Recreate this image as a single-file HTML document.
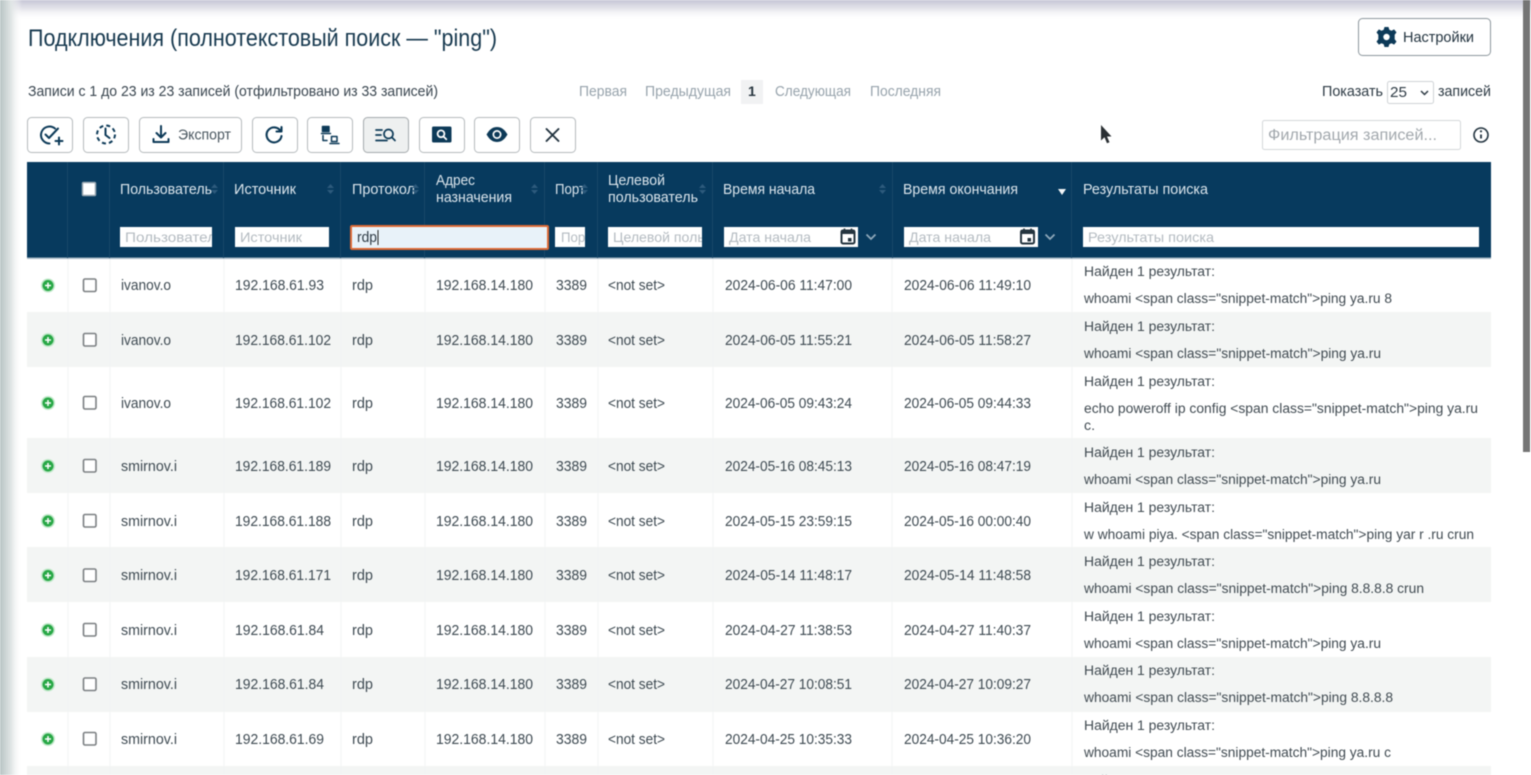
<!DOCTYPE html>
<html lang="ru"><head><meta charset="utf-8"><title>Подключения</title>
<style>
html,body{margin:0;padding:0;width:1531px;height:775px;overflow:hidden;background:#fff}
svg{display:block}
#root{filter:blur(.4px)}
text{font-family:"Liberation Sans","DejaVu Sans",sans-serif;font-size:14.5px;fill:#3e4a52;white-space:pre}
.h{fill:#dbe5ec;font-size:14.5px}
.ph{fill:#b4bbc1;font-size:14px}
.pg{fill:#97a3ac;font-size:14.5px}
.r{fill:#414b52;font-size:14.2px}
.ic{fill:none;stroke:#0d3a58;stroke-width:2;stroke-linecap:round;stroke-linejoin:round}
.ln{stroke:#f2f4f4;stroke-width:1}
.hl{stroke:#194769;stroke-width:1}
.btn{fill:#fff;stroke:#b5babd;stroke-width:1}
.cb{fill:#fff;stroke:#7b7f82;stroke-width:1.6}
.so{fill:#2d5a7c}
</style></head><body>
<svg id="root" width="1531" height="775" viewBox="0 0 1531 775" xmlns="http://www.w3.org/2000/svg">
<defs>
<linearGradient id="t" x1="0" y1="0" x2="0" y2="1"><stop offset="0" stop-color="#c6c6d6"/><stop offset=".45" stop-color="#e6e6ec"/><stop offset="1" stop-color="#fff" stop-opacity="0"/></linearGradient>
<linearGradient id="l" x1="0" y1="0" x2="1" y2="0"><stop offset="0" stop-color="#b8c4c4"/><stop offset=".5" stop-color="#e0e5e5"/><stop offset="1" stop-color="#fff" stop-opacity="0"/></linearGradient>
</defs>
<rect width="1531" height="775" fill="#fff"/>

<!-- striped rows -->
<g fill="#f3f5f4">
<rect x="27" y="312" width="1464" height="55"/>
<rect x="27" y="438" width="1464" height="55"/>
<rect x="27" y="547" width="1464" height="55"/>
<rect x="27" y="657" width="1464" height="55"/>
<rect x="27" y="766" width="1464" height="9"/>
</g>
<g class="ln">
<line x1="68" y1="258" x2="68" y2="775"/><line x1="110" y1="258" x2="110" y2="775"/><line x1="224" y1="258" x2="224" y2="775"/><line x1="341" y1="258" x2="341" y2="775"/><line x1="425" y1="258" x2="425" y2="775"/><line x1="545" y1="258" x2="545" y2="775"/><line x1="598" y1="258" x2="598" y2="775"/><line x1="713" y1="258" x2="713" y2="775"/><line x1="892" y1="258" x2="892" y2="775"/><line x1="1072" y1="258" x2="1072" y2="775"/>
</g>

<!-- edges -->
<rect width="1531" height="20" fill="url(#t)"/>
<rect width="22" height="775" fill="url(#l)"/>
<rect x="1523" y="0" width="7" height="452" fill="#757575"/>

<!-- title -->
<text x="28" y="46" textLength="469" lengthAdjust="spacingAndGlyphs" style="font-size:24px;fill:#17394f">Подключения (полнотекстовый поиск — "ping")</text>
<rect class="btn" x="1358.5" y="18.5" width="132" height="37" rx="4" style="stroke:#8d979d"/>
<!-- gear -->
<g transform="translate(1386.5 37)">
<path fill="#0d3a58" d="M-2-10H2L2.800-7.200 5-6.200 7.600-7.600 10-4.600 8.200-2.200V2.200L10 4.600 7.600 7.600 5 6.200 2.800 7.200 2 10H-2L-2.800 7.200-5 6.200-7.600 7.600-10 4.600-8.200 2.200V-2.200L-10-4.600-7.600-7.600-5-6.200-2.800-7.200Z"/>
<circle r="3.200" fill="#fff"/>
</g>
<text x="1403" y="42" textLength="71" lengthAdjust="spacingAndGlyphs" style="fill:#22333f">Настройки</text>

<!-- info row -->
<text x="28" y="96" textLength="410" lengthAdjust="spacingAndGlyphs" style="fill:#3a4650">Записи с 1 до 23 из 23 записей (отфильтровано из 33 записей)</text>
<text class="pg" x="579" y="96" textLength="48" lengthAdjust="spacingAndGlyphs">Первая</text>
<text class="pg" x="645" y="96" textLength="86" lengthAdjust="spacingAndGlyphs">Предыдущая</text>
<rect x="741" y="80" width="22" height="24" fill="#f1f2f3"/>
<text x="748" y="96" style="fill:#27353f;font-weight:bold;font-size:14px">1</text>
<text class="pg" x="775" y="96" textLength="76" lengthAdjust="spacingAndGlyphs">Следующая</text>
<text class="pg" x="870" y="96" textLength="71" lengthAdjust="spacingAndGlyphs">Последняя</text>
<text x="1322" y="96" textLength="61" lengthAdjust="spacingAndGlyphs" style="fill:#2d3a44">Показать</text>
<rect x="1387.5" y="81.5" width="46" height="22" rx="2" fill="#fff" stroke="#cfd3d6"/>
<text x="1390" y="97" textLength="17" lengthAdjust="spacingAndGlyphs" style="fill:#2d3a44">25</text>
<path d="M1421 91l3.500 3.500 3.500-3.500" fill="none" stroke="#2d3a44" stroke-width="1.500"/>
<text x="1438" y="96" textLength="53" lengthAdjust="spacingAndGlyphs" style="fill:#2d3a44">записей</text>

<!-- toolbar -->
<rect class="btn" x="27.500" y="117.500" width="45" height="35" rx="4"/>
<rect class="btn" x="83.500" y="117.500" width="45" height="35" rx="4"/>
<rect class="btn" x="139.500" y="117.500" width="102" height="35" rx="4"/>
<rect class="btn" x="252.500" y="117.500" width="45" height="35" rx="4"/>
<rect class="btn" x="307.500" y="117.500" width="45" height="35" rx="4"/>
<rect x="363.500" y="117.500" width="45" height="35" rx="4" fill="#eef0f0" stroke="#a4a9ac"/>
<rect class="btn" x="419.500" y="117.500" width="45" height="35" rx="4"/>
<rect class="btn" x="474.500" y="117.500" width="45" height="35" rx="4"/>
<rect class="btn" x="530.500" y="117.500" width="45" height="35" rx="4"/>
<!-- check-plus -->
<g class="ic">
<path d="M55 128.500A8.500 8.500 0 1 0 49.500 143.500"/>
<path d="M45.500 134.500l3.500 3.500 9-9.500"/>
<path d="M59 137.500v7M55.500 141h7"/>
</g>
<!-- history dashed -->
<g class="ic" style="stroke-linecap:butt">
<circle cx="106" cy="134.500" r="9" stroke-dasharray="4 3.070"/>
<path d="M105.500 128.500v6.500l4 3" style="stroke-linecap:round"/>
</g>
<!-- export -->
<g class="ic">
<path d="M161 126v11.500M156.500 133l4.500 4.500 4.500-4.500"/>
<path d="M153.500 139v3h15v-3"/>
</g>
<text x="178" y="139.500" textLength="53" lengthAdjust="spacingAndGlyphs" style="fill:#4a5760;font-size:14.5px">Экспорт</text>
<!-- refresh -->
<g class="ic" style="stroke-width:2.100">
<path d="M280.500 131A7.500 7.500 0 1 0 281.500 136"/>
<path d="M281.500 127v4.500h-5"/>
</g>
<!-- network -->
<g class="ic" style="stroke-width:1.500">
<rect x="322.500" y="126.500" width="6.500" height="5" fill="#0d3a58"/>
<path d="M321.500 133.500h9"/>
<path d="M323 135.500v5h4"/>
<rect x="331.500" y="136.500" width="5.500" height="5"/>
<path d="M330 143.500h9"/>
</g>
<!-- list search -->
<g class="ic" style="stroke-width:1.700">
<path d="M376 130h6M376 135h5M376 140.500h11"/>
<circle cx="388.500" cy="134" r="4.500"/>
<path d="M392 137.500l3 3"/>
</g>
<!-- filled search -->
<rect x="432" y="126.500" width="19.500" height="16" rx="1.500" fill="#0d3a58"/>
<circle cx="441" cy="133.800" r="3.400" fill="none" stroke="#fff" stroke-width="1.800"/>
<path d="M443.500 136.500l2.800 2.800" stroke="#fff" stroke-width="1.800" stroke-linecap="round"/>
<!-- eye -->
<path fill="#0d3a58" d="M486.500 134.500C490 128.500 493.500 127 497 127S504 128.500 507.500 134.500C504 140.500 500.500 142 497 142S490 140.500 486.500 134.500Z"/>
<circle cx="497" cy="134.500" r="4.500" fill="#fff"/>
<circle cx="497" cy="134.500" r="2.800" fill="#0d3a58"/>
<!-- x -->
<path d="M546.500 129l12 12M558.500 129l-12 12" fill="none" stroke="#22333f" stroke-width="1.900" stroke-linecap="round"/>

<!-- cursor -->
<path d="M1101 125v15.500l3.500-3.200 2.500 6 2.500-1-2.500-5.800h4.500Z" fill="#2a2f33"/>

<!-- filter -->
<rect x="1262.500" y="120.500" width="198" height="29" rx="2" fill="#fff" stroke="#d4d7d9"/>
<text x="1268" y="140" textLength="169" lengthAdjust="spacingAndGlyphs" style="fill:#a2a8ad;font-size:15.5px">Фильтрация записей...</text>
<circle cx="1481" cy="135" r="7" fill="none" stroke="#22333f" stroke-width="1.600"/>
<path d="M1481 134.500v4" stroke="#22333f" stroke-width="1.800"/>
<circle cx="1481" cy="131.300" r="1.100" fill="#22333f"/>

<!-- header -->
<rect x="27" y="162" width="1464" height="96" fill="#073a5e"/>
<rect x="27" y="257.500" width="1464" height="1.500" fill="#a9bac6"/>
<g class="hl">
<line x1="67.500" y1="162" x2="67.500" y2="258"/><line x1="109.500" y1="162" x2="109.500" y2="258"/><line x1="223.500" y1="162" x2="223.500" y2="258"/><line x1="340.500" y1="162" x2="340.500" y2="258"/><line x1="424.500" y1="162" x2="424.500" y2="258"/><line x1="544.500" y1="162" x2="544.500" y2="258"/><line x1="597.500" y1="162" x2="597.500" y2="258"/><line x1="712.500" y1="162" x2="712.500" y2="258"/><line x1="892.500" y1="162" x2="892.500" y2="258"/><line x1="1071.500" y1="162" x2="1071.500" y2="258"/>
</g>
<rect x="82.500" y="182.500" width="13" height="13" fill="#fff" stroke="#9aa7b1" stroke-width="1.500" rx="1"/>
<text class="h" x="120" y="194" textLength="92" lengthAdjust="spacingAndGlyphs">Пользователь</text>
<text class="h" x="234" y="194" textLength="62" lengthAdjust="spacingAndGlyphs">Источник</text>
<text class="h" x="352" y="194" textLength="63" lengthAdjust="spacingAndGlyphs">Протокол</text>
<text class="h" x="436" y="185" textLength="39" lengthAdjust="spacingAndGlyphs">Адрес</text>
<text class="h" x="436" y="202" textLength="76" lengthAdjust="spacingAndGlyphs">назначения</text>
<text class="h" x="555" y="194" textLength="30" lengthAdjust="spacingAndGlyphs">Порт</text>
<text class="h" x="608" y="185" textLength="57" lengthAdjust="spacingAndGlyphs">Целевой</text>
<text class="h" x="608" y="202" textLength="90" lengthAdjust="spacingAndGlyphs">пользователь</text>
<text class="h" x="723" y="194" textLength="92" lengthAdjust="spacingAndGlyphs">Время начала</text>
<text class="h" x="903" y="194" textLength="115" lengthAdjust="spacingAndGlyphs">Время окончания</text>
<text class="h" x="1083" y="194" textLength="125" lengthAdjust="spacingAndGlyphs">Результаты поиска</text>
<!-- sort -->
<g class="so">
<path d="M211 188l3.500-4 3.500 4ZM211 190l3.500 4 3.500-4Z"/>
<path d="M327 188l3.500-4 3.500 4ZM327 190l3.500 4 3.500-4Z"/>
<path d="M412 188l3.500-4 3.500 4ZM412 190l3.500 4 3.500-4Z"/>
<path d="M531 188l3.500-4 3.500 4ZM531 190l3.500 4 3.500-4Z"/>
<path d="M581 188l3.500-4 3.500 4ZM581 190l3.500 4 3.500-4Z"/>
<path d="M699 188l3.500-4 3.500 4ZM699 190l3.500 4 3.500-4Z"/>
<path d="M879 188l3.500-4 3.500 4ZM879 190l3.500 4 3.500-4Z"/>
</g>
<path d="M1058 189h8l-4 6Z" fill="#f2f5f7"/>
<!-- filter inputs -->
<g fill="#fff">
<rect x="120" y="227" width="92" height="20"/>
<rect x="235" y="227" width="94" height="20"/>
<rect x="555" y="227" width="30" height="20"/>
<rect x="608" y="227" width="94" height="20"/>
<rect x="724" y="227" width="134" height="20"/>
<rect x="904" y="227" width="134" height="20"/>
<rect x="1083" y="227" width="396" height="20"/>
</g>
<rect x="351" y="226" width="197" height="23" rx="1" fill="#e8f2f9" stroke="#dd6a36" stroke-width="2"/>
<text x="357" y="242" textLength="20" lengthAdjust="spacingAndGlyphs" style="fill:#2d3a44">rdp</text>
<line x1="378" y1="230" x2="378" y2="245" stroke="#222" stroke-width="1"/>
<svg x="120" y="227" width="92" height="20"><text class="ph" x="5" y="15" textLength="99" lengthAdjust="spacingAndGlyphs">Пользователь</text></svg>
<text class="ph" x="240" y="242" textLength="62" lengthAdjust="spacingAndGlyphs">Источник</text>
<svg x="555" y="227" width="30" height="20"><text class="ph" x="6" y="15" textLength="30" lengthAdjust="spacingAndGlyphs">Порт</text></svg>
<svg x="608" y="227" width="94" height="20"><text class="ph" x="5" y="15" textLength="150" lengthAdjust="spacingAndGlyphs">Целевой пользователь</text></svg>
<text class="ph" x="729" y="242" textLength="82" lengthAdjust="spacingAndGlyphs">Дата начала</text>
<text class="ph" x="909" y="242" textLength="82" lengthAdjust="spacingAndGlyphs">Дата начала</text>
<text class="ph" x="1088" y="242" textLength="126" lengthAdjust="spacingAndGlyphs">Результаты поиска</text>
<!-- calendar -->
<g>
<rect x="841.500" y="230.500" width="13" height="13" rx="1.500" fill="none" stroke="#24343f" stroke-width="2"/>
<rect x="841" y="230" width="14" height="4" fill="#24343f"/>
<path d="M844.500 228.500v3M851.500 228.500v3" stroke="#24343f" stroke-width="1.600"/>
<rect x="848" y="238" width="3.500" height="3.500" fill="#24343f"/>
</g>
<g transform="translate(179.500 0)">
<rect x="841.500" y="230.500" width="13" height="13" rx="1.500" fill="none" stroke="#24343f" stroke-width="2"/>
<rect x="841" y="230" width="14" height="4" fill="#24343f"/>
<path d="M844.500 228.500v3M851.500 228.500v3" stroke="#24343f" stroke-width="1.600"/>
<rect x="848" y="238" width="3.500" height="3.500" fill="#24343f"/>
</g>
<path d="M866.500 234.500l4.500 4.500 4.500-4.500M1045.500 234.500l4.500 4.500 4.500-4.500" fill="none" stroke="#8fa8ba" stroke-width="1.800"/>

<!-- ROW ICONS -->
<g>
<g fill="#bfe8c8"><circle cx="48" cy="285.500" r="7"/><circle cx="48" cy="340" r="7"/><circle cx="48" cy="403" r="7"/><circle cx="48" cy="466" r="7"/><circle cx="48" cy="521" r="7"/><circle cx="48" cy="575.500" r="7"/><circle cx="48" cy="630" r="7"/><circle cx="48" cy="684.500" r="7"/><circle cx="48" cy="739" r="7"/></g>
<g fill="#27a745"><circle cx="48" cy="285.500" r="5.500"/><circle cx="48" cy="340" r="5.500"/><circle cx="48" cy="403" r="5.500"/><circle cx="48" cy="466" r="5.500"/><circle cx="48" cy="521" r="5.500"/><circle cx="48" cy="575.500" r="5.500"/><circle cx="48" cy="630" r="5.500"/><circle cx="48" cy="684.500" r="5.500"/><circle cx="48" cy="739" r="5.500"/></g>
<path stroke="#fff" stroke-width="1.500" d="M45 285.500h6M48 282.500v6M45 340h6M48 337v6M45 403h6M48 400v6M45 466h6M48 463v6M45 521h6M48 518v6M45 575.500h6M48 572.500v6M45 630h6M48 627v6M45 684.500h6M48 681.500v6M45 739h6M48 736v6"/>
<g class="cb">
<rect x="83.500" y="279" width="12.500" height="12.500" rx="1.500"/>
<rect x="83.500" y="333.500" width="12.500" height="12.500" rx="1.500"/>
<rect x="83.500" y="396.500" width="12.500" height="12.500" rx="1.500"/>
<rect x="83.500" y="459.500" width="12.500" height="12.500" rx="1.500"/>
<rect x="83.500" y="514.500" width="12.500" height="12.500" rx="1.500"/>
<rect x="83.500" y="569" width="12.500" height="12.500" rx="1.500"/>
<rect x="83.500" y="623.500" width="12.500" height="12.500" rx="1.500"/>
<rect x="83.500" y="678" width="12.500" height="12.500" rx="1.500"/>
<rect x="83.500" y="732.500" width="12.500" height="12.500" rx="1.500"/>
</g>
</g>

<!-- ROW 1 -->
<text x="121" y="290" textLength="50" lengthAdjust="spacingAndGlyphs">ivanov.o</text>
<text x="235" y="290" textLength="89" lengthAdjust="spacingAndGlyphs">192.168.61.93</text>
<text x="352" y="290" textLength="21" lengthAdjust="spacingAndGlyphs">rdp</text>
<text x="436" y="290" textLength="97" lengthAdjust="spacingAndGlyphs">192.168.14.180</text>
<text x="556" y="290" textLength="31" lengthAdjust="spacingAndGlyphs">3389</text>
<text x="608" y="290" textLength="57" lengthAdjust="spacingAndGlyphs">&lt;not set&gt;</text>
<text x="725" y="290" textLength="127" lengthAdjust="spacingAndGlyphs">2024-06-06 11:47:00</text>
<text x="904" y="290" textLength="127" lengthAdjust="spacingAndGlyphs">2024-06-06 11:49:10</text>
<text class="r" x="1084" y="276" textLength="131" lengthAdjust="spacingAndGlyphs">Найден 1 результат:</text>
<text class="r" x="1084" y="303" textLength="308" lengthAdjust="spacingAndGlyphs">whoami &lt;span class="snippet-match"&gt;ping ya.ru 8</text>
<!-- ROW 2 -->
<text x="121" y="345" textLength="50" lengthAdjust="spacingAndGlyphs">ivanov.o</text>
<text x="235" y="345" textLength="96" lengthAdjust="spacingAndGlyphs">192.168.61.102</text>
<text x="352" y="345" textLength="21" lengthAdjust="spacingAndGlyphs">rdp</text>
<text x="436" y="345" textLength="97" lengthAdjust="spacingAndGlyphs">192.168.14.180</text>
<text x="556" y="345" textLength="31" lengthAdjust="spacingAndGlyphs">3389</text>
<text x="608" y="345" textLength="57" lengthAdjust="spacingAndGlyphs">&lt;not set&gt;</text>
<text x="725" y="345" textLength="127" lengthAdjust="spacingAndGlyphs">2024-06-05 11:55:21</text>
<text x="904" y="345" textLength="127" lengthAdjust="spacingAndGlyphs">2024-06-05 11:58:27</text>
<text class="r" x="1084" y="331" textLength="131" lengthAdjust="spacingAndGlyphs">Найден 1 результат:</text>
<text class="r" x="1084" y="358" textLength="297" lengthAdjust="spacingAndGlyphs">whoami &lt;span class="snippet-match"&gt;ping ya.ru</text>
<!-- ROW 3 -->
<text x="121" y="408" textLength="50" lengthAdjust="spacingAndGlyphs">ivanov.o</text>
<text x="235" y="408" textLength="96" lengthAdjust="spacingAndGlyphs">192.168.61.102</text>
<text x="352" y="408" textLength="21" lengthAdjust="spacingAndGlyphs">rdp</text>
<text x="436" y="408" textLength="97" lengthAdjust="spacingAndGlyphs">192.168.14.180</text>
<text x="556" y="408" textLength="31" lengthAdjust="spacingAndGlyphs">3389</text>
<text x="608" y="408" textLength="57" lengthAdjust="spacingAndGlyphs">&lt;not set&gt;</text>
<text x="725" y="408" textLength="127" lengthAdjust="spacingAndGlyphs">2024-06-05 09:43:24</text>
<text x="904" y="408" textLength="127" lengthAdjust="spacingAndGlyphs">2024-06-05 09:44:33</text>
<text class="r" x="1084" y="386" textLength="131" lengthAdjust="spacingAndGlyphs">Найден 1 результат:</text>
<text class="r" x="1084" y="413" textLength="394" lengthAdjust="spacingAndGlyphs">echo poweroff ip config &lt;span class="snippet-match"&gt;ping ya.ru</text>
<text class="r" x="1084" y="430" textLength="11" lengthAdjust="spacingAndGlyphs">c.</text>
<!-- ROW 4 -->
<text x="121" y="471" textLength="56" lengthAdjust="spacingAndGlyphs">smirnov.i</text>
<text x="235" y="471" textLength="96" lengthAdjust="spacingAndGlyphs">192.168.61.189</text>
<text x="352" y="471" textLength="21" lengthAdjust="spacingAndGlyphs">rdp</text>
<text x="436" y="471" textLength="97" lengthAdjust="spacingAndGlyphs">192.168.14.180</text>
<text x="556" y="471" textLength="31" lengthAdjust="spacingAndGlyphs">3389</text>
<text x="608" y="471" textLength="57" lengthAdjust="spacingAndGlyphs">&lt;not set&gt;</text>
<text x="725" y="471" textLength="127" lengthAdjust="spacingAndGlyphs">2024-05-16 08:45:13</text>
<text x="904" y="471" textLength="127" lengthAdjust="spacingAndGlyphs">2024-05-16 08:47:19</text>
<text class="r" x="1084" y="457" textLength="131" lengthAdjust="spacingAndGlyphs">Найден 1 результат:</text>
<text class="r" x="1084" y="484" textLength="297" lengthAdjust="spacingAndGlyphs">whoami &lt;span class="snippet-match"&gt;ping ya.ru</text>
<!-- ROW 5 -->
<text x="121" y="526" textLength="56" lengthAdjust="spacingAndGlyphs">smirnov.i</text>
<text x="235" y="526" textLength="96" lengthAdjust="spacingAndGlyphs">192.168.61.188</text>
<text x="352" y="526" textLength="21" lengthAdjust="spacingAndGlyphs">rdp</text>
<text x="436" y="526" textLength="97" lengthAdjust="spacingAndGlyphs">192.168.14.180</text>
<text x="556" y="526" textLength="31" lengthAdjust="spacingAndGlyphs">3389</text>
<text x="608" y="526" textLength="57" lengthAdjust="spacingAndGlyphs">&lt;not set&gt;</text>
<text x="725" y="526" textLength="127" lengthAdjust="spacingAndGlyphs">2024-05-15 23:59:15</text>
<text x="904" y="526" textLength="127" lengthAdjust="spacingAndGlyphs">2024-05-16 00:00:40</text>
<text class="r" x="1084" y="512" textLength="131" lengthAdjust="spacingAndGlyphs">Найден 1 результат:</text>
<text class="r" x="1084" y="539" textLength="390" lengthAdjust="spacingAndGlyphs">w whoami piya. &lt;span class="snippet-match"&gt;ping yar r .ru crun</text>
<!-- ROW 6 -->
<text x="121" y="580" textLength="56" lengthAdjust="spacingAndGlyphs">smirnov.i</text>
<text x="235" y="580" textLength="96" lengthAdjust="spacingAndGlyphs">192.168.61.171</text>
<text x="352" y="580" textLength="21" lengthAdjust="spacingAndGlyphs">rdp</text>
<text x="436" y="580" textLength="97" lengthAdjust="spacingAndGlyphs">192.168.14.180</text>
<text x="556" y="580" textLength="31" lengthAdjust="spacingAndGlyphs">3389</text>
<text x="608" y="580" textLength="57" lengthAdjust="spacingAndGlyphs">&lt;not set&gt;</text>
<text x="725" y="580" textLength="127" lengthAdjust="spacingAndGlyphs">2024-05-14 11:48:17</text>
<text x="904" y="580" textLength="127" lengthAdjust="spacingAndGlyphs">2024-05-14 11:48:58</text>
<text class="r" x="1084" y="566" textLength="131" lengthAdjust="spacingAndGlyphs">Найден 1 результат:</text>
<text class="r" x="1084" y="593" textLength="340" lengthAdjust="spacingAndGlyphs">whoami &lt;span class="snippet-match"&gt;ping 8.8.8.8 crun</text>
<!-- ROW 7 -->
<text x="121" y="635" textLength="56" lengthAdjust="spacingAndGlyphs">smirnov.i</text>
<text x="235" y="635" textLength="89" lengthAdjust="spacingAndGlyphs">192.168.61.84</text>
<text x="352" y="635" textLength="21" lengthAdjust="spacingAndGlyphs">rdp</text>
<text x="436" y="635" textLength="97" lengthAdjust="spacingAndGlyphs">192.168.14.180</text>
<text x="556" y="635" textLength="31" lengthAdjust="spacingAndGlyphs">3389</text>
<text x="608" y="635" textLength="57" lengthAdjust="spacingAndGlyphs">&lt;not set&gt;</text>
<text x="725" y="635" textLength="127" lengthAdjust="spacingAndGlyphs">2024-04-27 11:38:53</text>
<text x="904" y="635" textLength="127" lengthAdjust="spacingAndGlyphs">2024-04-27 11:40:37</text>
<text class="r" x="1084" y="621" textLength="131" lengthAdjust="spacingAndGlyphs">Найден 1 результат:</text>
<text class="r" x="1084" y="648" textLength="297" lengthAdjust="spacingAndGlyphs">whoami &lt;span class="snippet-match"&gt;ping ya.ru</text>
<!-- ROW 8 -->
<text x="121" y="689" textLength="56" lengthAdjust="spacingAndGlyphs">smirnov.i</text>
<text x="235" y="689" textLength="89" lengthAdjust="spacingAndGlyphs">192.168.61.84</text>
<text x="352" y="689" textLength="21" lengthAdjust="spacingAndGlyphs">rdp</text>
<text x="436" y="689" textLength="97" lengthAdjust="spacingAndGlyphs">192.168.14.180</text>
<text x="556" y="689" textLength="31" lengthAdjust="spacingAndGlyphs">3389</text>
<text x="608" y="689" textLength="57" lengthAdjust="spacingAndGlyphs">&lt;not set&gt;</text>
<text x="725" y="689" textLength="127" lengthAdjust="spacingAndGlyphs">2024-04-27 10:08:51</text>
<text x="904" y="689" textLength="127" lengthAdjust="spacingAndGlyphs">2024-04-27 10:09:27</text>
<text class="r" x="1084" y="675" textLength="131" lengthAdjust="spacingAndGlyphs">Найден 1 результат:</text>
<text class="r" x="1084" y="702" textLength="309" lengthAdjust="spacingAndGlyphs">whoami &lt;span class="snippet-match"&gt;ping 8.8.8.8</text>
<!-- ROW 9 -->
<text x="121" y="744" textLength="56" lengthAdjust="spacingAndGlyphs">smirnov.i</text>
<text x="235" y="744" textLength="89" lengthAdjust="spacingAndGlyphs">192.168.61.69</text>
<text x="352" y="744" textLength="21" lengthAdjust="spacingAndGlyphs">rdp</text>
<text x="436" y="744" textLength="97" lengthAdjust="spacingAndGlyphs">192.168.14.180</text>
<text x="556" y="744" textLength="31" lengthAdjust="spacingAndGlyphs">3389</text>
<text x="608" y="744" textLength="57" lengthAdjust="spacingAndGlyphs">&lt;not set&gt;</text>
<text x="725" y="744" textLength="127" lengthAdjust="spacingAndGlyphs">2024-04-25 10:35:33</text>
<text x="904" y="744" textLength="127" lengthAdjust="spacingAndGlyphs">2024-04-25 10:36:20</text>
<text class="r" x="1084" y="730" textLength="131" lengthAdjust="spacingAndGlyphs">Найден 1 результат:</text>
<text class="r" x="1084" y="757" textLength="307" lengthAdjust="spacingAndGlyphs">whoami &lt;span class="snippet-match"&gt;ping ya.ru c</text>
<!-- ROW 10 partial -->
<text class="r" x="1084" y="785" textLength="138" lengthAdjust="spacingAndGlyphs">Найдено 3 результата:</text>
</svg>
</body></html>
